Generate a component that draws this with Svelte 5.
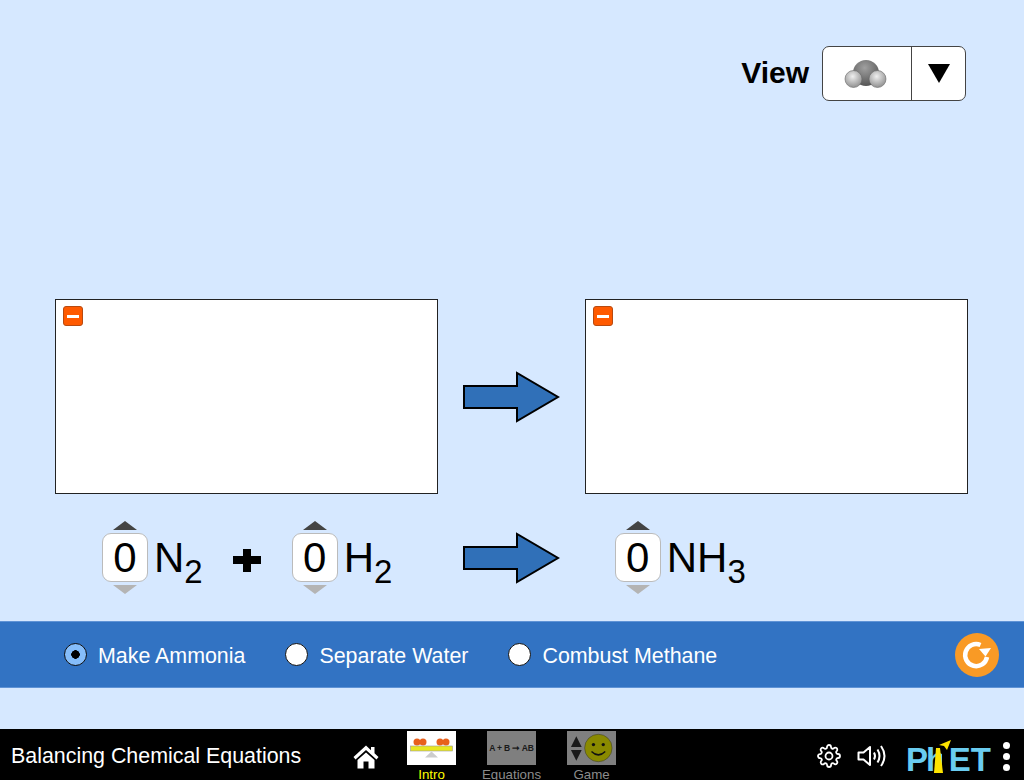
<script lang="ts">
  let reaction = $state('ammonia');

  const reactions = [
    { id: 'ammonia', label: 'Make Ammonia' },
    { id: 'water', label: 'Separate Water' },
    { id: 'methane', label: 'Combust Methane' }
  ];
</script>

{#snippet arrow()}
  <svg class="arrow" width="98" height="52" viewBox="0 0 98 52">
    <path d="M2 15H55V2L96 26L55 50V37H2Z" fill="#3070b8" stroke="#000" stroke-width="2" />
  </svg>
{/snippet}

{#snippet spinner()}
  <div class="spinner">
    <span class="tri up"></span>
    <div class="value">0</div>
    <span class="tri down"></span>
  </div>
{/snippet}

{#snippet box()}
  <div class="box">
    <button class="minus" aria-label="collapse"><span></span></button>
  </div>
{/snippet}

<div class="sim">
  <main>
    <div class="view-row">
      <span class="view-label">View</span>
      <div class="combo">
        <div class="combo-value">
          <svg width="46" height="30" viewBox="0 0 46 30">
            <defs>
              <radialGradient id="big" cx="0.45" cy="0.3" r="0.75">
                <stop offset="0" stop-color="#a0a0a0" />
                <stop offset="1" stop-color="#505050" />
              </radialGradient>
              <radialGradient id="small" cx="0.45" cy="0.35" r="0.7">
                <stop offset="0" stop-color="#efefef" />
                <stop offset="1" stop-color="#8a8a8a" />
              </radialGradient>
            </defs>
            <circle cx="22" cy="14" r="13" fill="url(#big)" />
            <circle cx="9.500" cy="20" r="8.500" fill="url(#small)" stroke="#666" stroke-width="0.6" />
            <circle cx="33.500" cy="20" r="8.500" fill="url(#small)" stroke="#666" stroke-width="0.6" />
          </svg>
        </div>
        <div class="combo-btn"><span></span></div>
      </div>
    </div>

    <div class="boxes">
      {@render box()}
      {@render arrow()}
      {@render box()}
    </div>

    <div class="equation">
      <div class="term">
        {@render spinner()}
        <span class="formula">N<sub>2</sub></span>
      </div>
      <span class="plus"></span>
      <div class="term second">
        {@render spinner()}
        <span class="formula">H<sub>2</sub></span>
      </div>
      <div class="eq-arrow">{@render arrow()}</div>
      <div class="term">
        {@render spinner()}
        <span class="formula">NH<sub>3</sub></span>
      </div>
    </div>

    <div class="band">
      {#each reactions as r}
        <label class="radio">
          <input type="radio" bind:group={reaction} value={r.id} />
          <span class="dot"></span>
          <span class="radio-text">{r.label}</span>
        </label>
      {/each}
      <button class="reset" aria-label="reset">
        <svg width="32" height="30" viewBox="0 0 32 30">
          <path d="M26 17A11 11 0 1 1 19.500 5" fill="none" stroke="#fff" stroke-width="4.500" />
          <path d="M18 9L30 8L24.500 16.500Z" fill="#fff" />
        </svg>
      </button>
    </div>
  </main>

  <nav>
    <span class="title">Balancing Chemical Equations</span>

    <svg class="home" width="26" height="24" viewBox="0 0 26 24">
      <path d="M13 0.500L0.500 12L2.500 14.500L13 5L23.500 14.500L25.500 12L21.500 8.300V2H18V5.200Z" fill="#fff" />
      <path d="M4.500 15L13 7.500L21.500 15V23.500H15.500V16.500H10.500V23.500H4.500Z" fill="#fff" />
    </svg>

    <div class="screens">
      <div class="screen active">
        <div class="thumb intro">
          <svg width="49" height="34" viewBox="0 0 49 34">
            <g fill="#e8601c">
              <circle cx="10" cy="11" r="3.500" /><circle cx="16" cy="11" r="3.500" />
              <circle cx="33" cy="11" r="3.500" /><circle cx="39" cy="11" r="3.500" />
            </g>
            <rect x="3.500" y="15" width="42" height="5" fill="#e8e620" stroke="#999" stroke-width="0.6" />
            <path d="M24.500 20.500L31 26.500H18Z" fill="#ccc" />
          </svg>
        </div>
        <span>Intro</span>
      </div>
      <div class="screen">
        <div class="thumb eq"><b>A + B ➞ AB</b></div>
        <span>Equations</span>
      </div>
      <div class="screen">
        <div class="thumb game">
          <svg width="50" height="34" viewBox="0 0 50 34">
            <path d="M9.500 5L15 16H4Z" fill="#1a1a1a" />
            <path d="M9.500 30L4 19H15Z" fill="#1a1a1a" />
            <circle cx="32" cy="17" r="14" fill="#8a8a00" stroke="#333" stroke-width="0.5" />
            <circle cx="27" cy="13.500" r="1.700" fill="#111" />
            <circle cx="37" cy="13.500" r="1.700" fill="#111" />
            <path d="M25 20.500Q32 27.500 39 20.500" fill="none" stroke="#111" stroke-width="1.500" />
          </svg>
        </div>
        <span>Game</span>
      </div>
    </div>

    <div class="right">
      <svg width="24" height="24" viewBox="0 0 24 24" fill="none" stroke="#fff" stroke-width="1.800" stroke-linejoin="round">
        <circle cx="12" cy="12" r="3.500" />
        <path d="M19.400 15a1.650 1.650 0 0 0 .33 1.820l.06.06a2 2 0 0 1 0 2.830 2 2 0 0 1-2.830 0l-.06-.06a1.650 1.650 0 0 0-1.820-.33 1.650 1.650 0 0 0-1 1.510V21a2 2 0 0 1-2 2 2 2 0 0 1-2-2v-.09A1.650 1.650 0 0 0 9 19.400a1.650 1.650 0 0 0-1.820.33l-.06.06a2 2 0 0 1-2.830 0 2 2 0 0 1 0-2.830l.06-.06a1.650 1.650 0 0 0 .33-1.820 1.650 1.650 0 0 0-1.510-1H3a2 2 0 0 1-2-2 2 2 0 0 1 2-2h.09A1.650 1.650 0 0 0 4.600 9a1.650 1.650 0 0 0-.33-1.820l-.06-.06a2 2 0 0 1 0-2.830 2 2 0 0 1 2.830 0l.06.06a1.650 1.650 0 0 0 1.820.33H9a1.650 1.650 0 0 0 1-1.510V3a2 2 0 0 1 2-2 2 2 0 0 1 2 2v.09a1.650 1.650 0 0 0 1 1.510 1.650 1.650 0 0 0 1.820-.33l.06-.06a2 2 0 0 1 2.830 0 2 2 0 0 1 0 2.830l-.06.06a1.650 1.650 0 0 0-.33 1.820V9a1.650 1.650 0 0 0 1.510 1H21a2 2 0 0 1 2 2 2 2 0 0 1-2 2h-.09a1.650 1.650 0 0 0-1.510 1z" />
      </svg>
      <svg class="sound" width="30" height="24" viewBox="0 0 30 24" fill="none" stroke="#fff" stroke-width="2">
        <path d="M1.500 8.500H6.500L13 3V21L6.500 15.500H1.500Z" stroke-linejoin="round" />
        <path d="M17 8.500Q19 12 17 15.500" />
        <path d="M20.500 5.500Q24.500 12 20.500 18.500" />
        <path d="M24 2Q31 12 24 22" />
      </svg>
      <div class="phet">
        <span class="ph">Ph</span><span>ET</span>
        <svg class="flame" width="24" height="36" viewBox="0 0 24 36">
          <rect x="13" y="10" width="6" height="25" fill="#000" />
          <path d="M7 10H11L14 35H5Z" fill="#fde400" />
          <path d="M10 7L22 2L18 12L15 8Z" fill="#fde400" />
        </svg>
      </div>
      <div class="dots"><i></i><i></i><i></i></div>
    </div>
  </nav>
</div>

<style>
  :global(body) {
    margin: 0;
  }

  .sim {
    width: 1024px;
    height: 780px;
    display: flex;
    flex-direction: column;
    background: #d6e8ff;
    font-family: "Liberation Sans", Arial, sans-serif;
    overflow: hidden;
  }

  main {
    flex: 1;
    display: flex;
    flex-direction: column;
  }

  .view-row {
    display: flex;
    justify-content: flex-end;
    align-items: center;
    gap: 13px;
    padding: 46px 58px 0 0;
  }

  .view-label {
    font-size: 30px;
    font-weight: 700;
    color: #000;
    margin-top: -2px;
  }

  .combo {
    display: flex;
    width: 144px;
    height: 55px;
    background: #fff;
    border: 1.500px solid #444;
    border-radius: 7px;
    box-sizing: border-box;
  }

  .combo-value {
    width: 88px;
    display: flex;
    align-items: center;
    justify-content: center;
    border-right: 1.500px solid #444;
  }

  .combo-btn {
    flex: 1;
    display: flex;
    align-items: center;
    justify-content: center;
  }

  .combo-btn span {
    width: 0;
    height: 0;
    border-left: 11px solid transparent;
    border-right: 11px solid transparent;
    border-top: 19px solid #000;
  }

  .boxes {
    display: flex;
    align-items: center;
    padding-left: 55px;
    margin-top: 198px;
  }

  .box {
    position: relative;
    width: 383px;
    height: 195px;
    box-sizing: border-box;
    background: #fff;
    border: 1.500px solid #222;
  }

  .arrow {
    display: block;
  }

  .boxes .arrow {
    margin: 0 25px 0 24px;
  }

  .minus {
    position: absolute;
    left: 6.500px;
    top: 6px;
    width: 20px;
    height: 20px;
    padding: 0;
    border: 1px solid #b84a10;
    border-radius: 3px;
    background: #ff5a00;
    display: flex;
    align-items: center;
    justify-content: center;
  }

  .minus span {
    width: 12px;
    height: 3px;
    background: #fff;
  }

  .equation {
    display: flex;
    align-items: center;
    padding-left: 102px;
    margin-top: 26px;
    height: 75px;
  }

  .term {
    display: flex;
    align-items: center;
    gap: 6px;
  }

  .spinner {
    width: 46px;
    display: flex;
    flex-direction: column;
    align-items: center;
    gap: 3px;
  }

  .value {
    width: 46px;
    height: 49px;
    box-sizing: border-box;
    background: #fff;
    border: 1px solid #bbb;
    border-radius: 9px;
    font-size: 42px;
    line-height: 47px;
    text-align: center;
    color: #000;
  }

  .tri {
    width: 0;
    height: 0;
    border-left: 12px solid transparent;
    border-right: 12px solid transparent;
  }

  .tri.up {
    border-bottom: 9px solid #444;
  }

  .tri.down {
    border-top: 9px solid #b4b4b4;
  }

  .formula {
    font-size: 42px;
    line-height: 48px;
    color: #000;
    white-space: nowrap;
  }

  .formula sub {
    font-size: 33px;
    line-height: 0;
    vertical-align: -11px;
  }

  .plus {
    width: 28px;
    height: 23px;
    margin: 5px 31px 0 30px;
    background:
      linear-gradient(#000, #000) center / 28px 8px no-repeat,
      linear-gradient(#000, #000) center / 8px 23px no-repeat;
  }

  .eq-arrow {
    width: 98px;
    margin-right: 55px;
  }

  .term.second {
    width: 170px;
  }

  .band {
    display: flex;
    align-items: center;
    height: 67px;
    margin-top: 26px;
    padding-left: 64px;
    background: #3273c3;
    box-shadow: inset 0 1px 0 #5f93d6, inset 0 -1px 0 #5f93d6;
    position: relative;
  }

  .radio {
    display: flex;
    align-items: center;
    gap: 11px;
    margin-right: 40px;
    font-size: 21.400px;
    color: #fff;
  }

  .radio-text {
    padding-top: 3px;
  }

  .radio input {
    display: none;
  }

  .dot {
    width: 23px;
    height: 23px;
    box-sizing: border-box;
    border: 1.500px solid #111;
    border-radius: 50%;
    background: #fff;
  }

  .radio input:checked + .dot {
    background: radial-gradient(circle, #000 0 4px, #85bdfa 4.500px);
  }

  .reset {
    position: absolute;
    right: 25px;
    top: 12px;
    width: 44px;
    height: 44px;
    padding: 0;
    border: none;
    border-radius: 50%;
    background: radial-gradient(circle at 47% 45%, #f99a25 72%, #9a6a38 100%);
    display: flex;
    align-items: center;
    justify-content: center;
  }

  nav {
    height: 51px;
    background: #000;
    display: flex;
    align-items: center;
    color: #fff;
  }

  .title {
    width: 352px;
    padding: 3px 0 0 11px;
    box-sizing: border-box;
    font-size: 21.400px;
    white-space: nowrap;
    flex-shrink: 0;
  }

  .home {
    margin: 4px 0 0 1px;
  }

  .screens {
    display: flex;
    gap: 31px;
    margin-left: 28px;
    align-self: flex-start;
    padding-top: 2px;
  }

  .screen {
    width: 49px;
    display: flex;
    flex-direction: column;
    align-items: center;
    font-size: 13.300px;
    color: #8c8c8c;
    line-height: 15px;
  }

  .screen.active {
    color: #ff0;
  }

  .screen span {
    margin-top: 2px;
    white-space: nowrap;
  }

  .thumb {
    width: 49px;
    height: 34px;
    display: flex;
    align-items: center;
    justify-content: center;
    overflow: hidden;
    background: #7f7f7f;
  }

  .thumb.intro {
    background: #fff;
  }

  .thumb.eq b {
    font-size: 8.500px;
    letter-spacing: -0.2px;
    color: #1a1a1a;
    white-space: nowrap;
  }

  .right {
    margin-left: auto;
    padding: 3px 14px 0 0;
    display: flex;
    align-items: center;
  }

  .sound {
    margin-left: 16px;
  }

  .phet {
    position: relative;
    display: flex;
    justify-content: space-between;
    width: 85px;
    margin: 8px 0 0 19px;
    font-size: 33px;
    font-weight: 700;
    line-height: 30px;
    color: #6accf0;
    white-space: nowrap;
  }

  .ph {
    letter-spacing: -2px;
  }

  .flame {
    position: absolute;
    left: 23px;
    top: -7px;
  }

  .dots {
    display: flex;
    flex-direction: column;
    gap: 4px;
    margin-left: 12px;
  }

  .dots i {
    width: 7px;
    height: 7px;
    border-radius: 50%;
    background: #fff;
  }
</style>
